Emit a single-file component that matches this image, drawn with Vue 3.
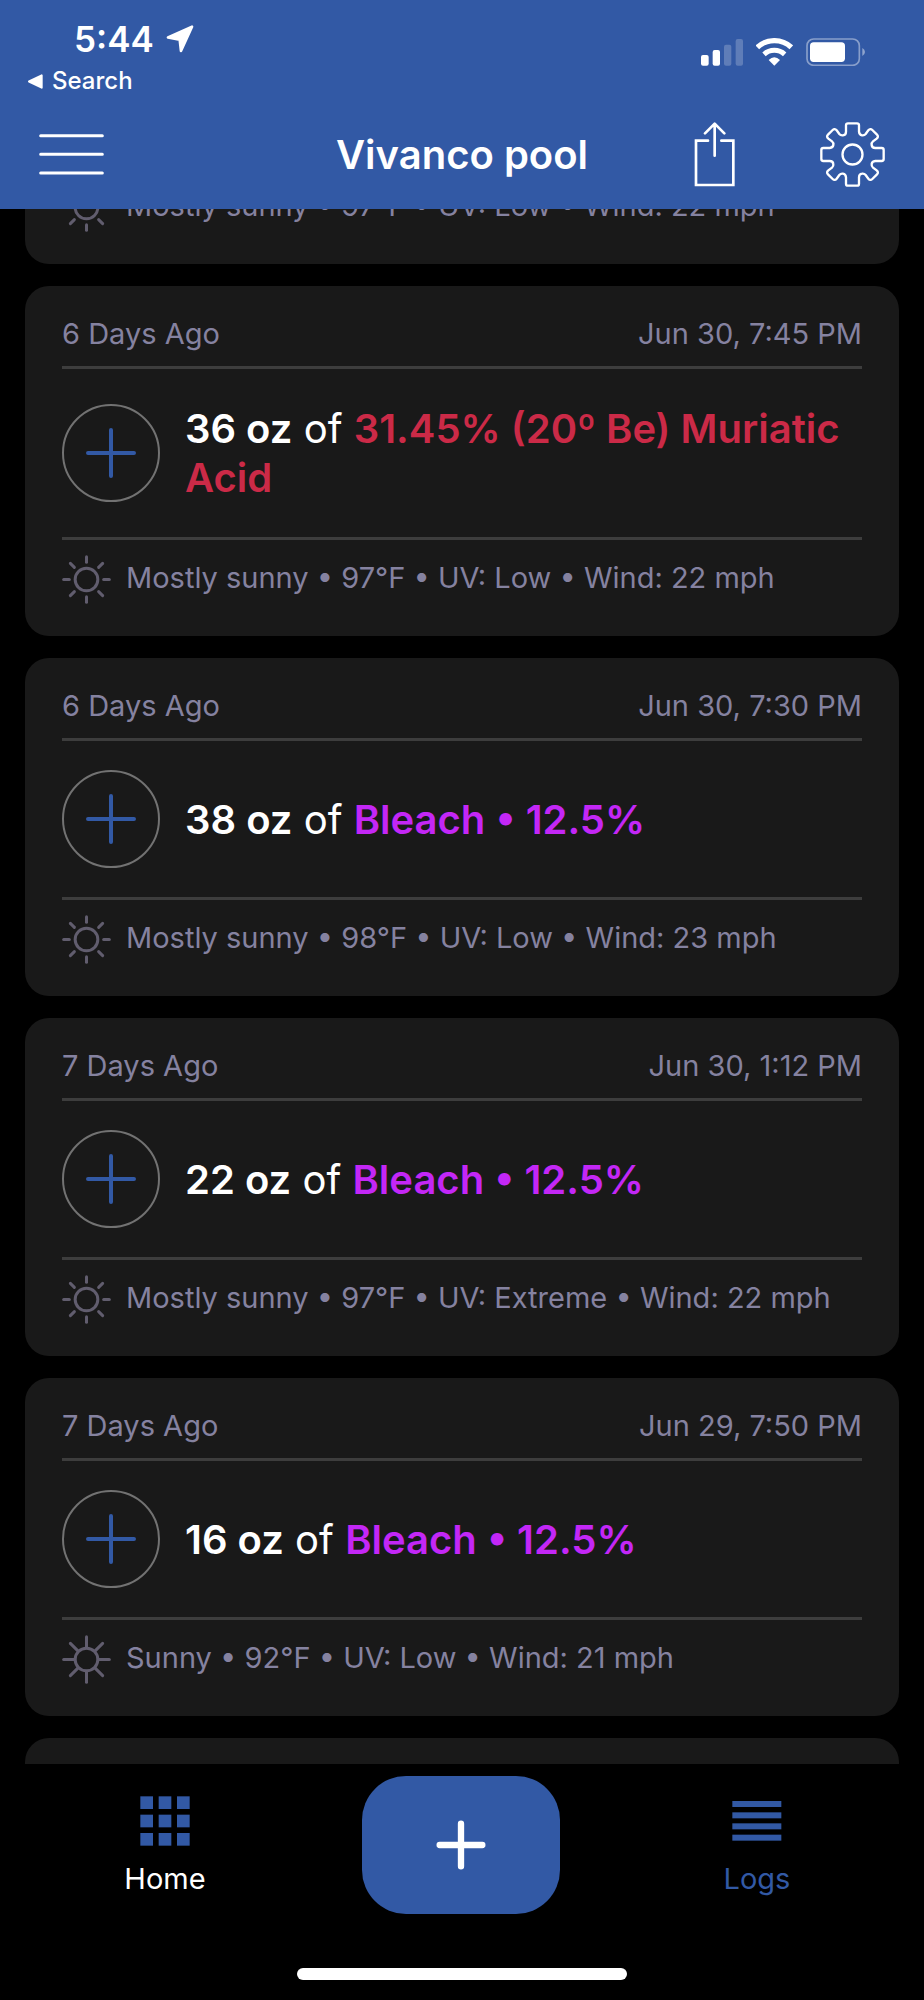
<script setup>
import { onMounted, ref } from 'vue'

const feed = ref(null)

const entries = [
  { id: 1, sky: 'partial', weather: 'Mostly sunny • 97°F • UV: Low • Wind: 22 mph' },
  {
    id: 2, age: '6 Days Ago', date: 'Jun 30, 7:45 PM', amount: '36 oz',
    product: '31.45% (20º Be) Muriatic Acid', kind: 'acid',
    sky: 'partial', weather: 'Mostly sunny • 97°F • UV: Low • Wind: 22 mph'
  },
  {
    id: 3, age: '6 Days Ago', date: 'Jun 30, 7:30 PM', amount: '38 oz',
    product: 'Bleach • 12.5%', kind: 'chlorine',
    sky: 'partial', weather: 'Mostly sunny • 98°F • UV: Low • Wind: 23 mph'
  },
  {
    id: 4, age: '7 Days Ago', date: 'Jun 30, 1:12 PM', amount: '22 oz',
    product: 'Bleach • 12.5%', kind: 'chlorine',
    sky: 'partial', weather: 'Mostly sunny • 97°F • UV: Extreme • Wind: 22 mph'
  },
  {
    id: 5, age: '7 Days Ago', date: 'Jun 29, 7:50 PM', amount: '16 oz',
    product: 'Bleach • 12.5%', kind: 'chlorine',
    sky: 'clear', weather: 'Sunny • 92°F • UV: Low • Wind: 21 mph'
  },
  { id: 6 }
]

const quarterTurns = [0, 90, 180, 270]
const eighthTurns = [0, 45, 90, 135, 180, 225, 270, 315]
const gridSteps = [0, 55, 110]
const lineSteps = [15, 49, 82, 116]

// The feed opens part-way down, below the weather row of a newer entry.
onMounted(() => {
  feed.value.scrollTop = 41
})
</script>

<template>
  <div class="app">
    <header class="header">
      <div class="status">
        <div class="status-left">
          <div class="time">
            <span>5:44</span>
            <svg class="location" viewBox="0 0 84 86" aria-hidden="true">
              <path d="M79 5 5 38 41 45 45 80Z" fill="#fff" stroke="#fff" stroke-width="8" stroke-linejoin="round" />
            </svg>
          </div>
          <a class="back" href="#search">
            <svg class="back-arrow" viewBox="0 0 46 46" aria-hidden="true">
              <path d="M3 23 42 4V42Z" fill="#fff" stroke="#fff" stroke-width="6" stroke-linejoin="round" />
            </svg>
            <span>Search</span>
          </a>
        </div>
        <div class="status-right">
          <svg class="signal" viewBox="0 0 126 84" aria-hidden="true">
            <g fill="#fff">
              <rect x="0" y="51" width="23" height="32" rx="6" />
              <rect x="35" y="36" width="22" height="47" rx="6" />
              <rect x="69" y="20" width="22" height="63" rx="6" opacity="0.22" />
              <rect x="104" y="3" width="22" height="80" rx="6" opacity="0.22" />
            </g>
          </svg>
          <svg class="wifi" viewBox="0 0 111 84" aria-hidden="true">
            <g fill="none" stroke="#fff">
              <path d="M4 28A75 75 0 0 1 106 28" stroke-width="16" />
              <path d="M24 49A46 46 0 0 1 86 49" stroke-width="15" />
            </g>
            <path d="M38 66Q55 50 72 66L55 83Z" fill="#fff" />
          </svg>
          <svg class="battery" viewBox="0 0 177 84" aria-hidden="true">
            <rect x="3" y="3" width="157" height="79" rx="20" fill="none" stroke="#fff" stroke-width="5" opacity="0.42" />
            <rect x="12" y="13" width="105" height="59" rx="11" fill="#fff" />
            <path d="M169 30Q177 35 177 42T169 54Z" fill="#fff" opacity="0.45" />
          </svg>
        </div>
      </div>

      <div class="nav">
        <button class="icon-button" type="button" aria-label="Menu">
          <svg class="nav-icon" viewBox="0 0 195 195" aria-hidden="true">
            <path d="M5 41H190M5 97H190M5 153H190" stroke="#fff" stroke-width="9" stroke-linecap="round" />
          </svg>
        </button>
        <h1 class="title">Vivanco pool</h1>
        <div class="nav-actions">
          <button class="icon-button" type="button" aria-label="Share">
            <svg class="share" viewBox="0 0 123 195" aria-hidden="true">
              <g fill="none" stroke="#fff" stroke-width="8" stroke-linecap="round">
                <path d="M42 56H6V189H118V56H82" />
                <path d="M62 101V6M33 34 62 5 91 34" stroke-linejoin="round" />
              </g>
            </svg>
          </button>
          <button class="icon-button" type="button" aria-label="Settings">
            <svg class="nav-icon" viewBox="0 0 195 195" aria-hidden="true">
              <g fill="none" stroke="#fff" stroke-width="7">
                <path
                  v-for="turn in quarterTurns"
                  :key="turn"
                  :transform="`rotate(${turn} 97.5 97.5)`"
                  d="M84 4H111Q117 4 117 10V29Q118 39 126 40Q133 41 137 36L145 25Q151 18 157 24L171 38Q177 44 170 50L159 58Q154 62 155 69Q156 78 166 78H185Q191 78 191 84"
                />
                <circle cx="97.5" cy="97.5" r="30" />
              </g>
            </svg>
          </button>
        </div>
      </div>
    </header>

    <main ref="feed" class="feed">
      <article v-for="entry in entries" :key="entry.id" class="card" :class="{ pending: !entry.weather }">
        <template v-if="entry.amount">
          <div class="card-head">
            <span>{{ entry.age }}</span>
            <time>{{ entry.date }}</time>
          </div>
          <div class="card-body">
            <svg class="dose-icon" viewBox="0 0 98 98" aria-hidden="true">
              <circle cx="49" cy="49" r="48" fill="none" stroke="#727272" stroke-width="2" />
              <path d="M26 49H72M49 26V72" stroke="#3259a5" stroke-width="4" stroke-linecap="round" />
            </svg>
            <p class="dose"><b>{{ entry.amount }}</b> of <b :class="entry.kind">{{ entry.product }}</b></p>
          </div>
        </template>
        <div v-if="entry.weather" class="card-foot">
          <svg class="sun" viewBox="0 0 147 147" aria-hidden="true">
            <g fill="none" stroke="#615d6e" stroke-width="9" stroke-linecap="round">
              <circle cx="73.5" cy="73.5" r="34" />
              <path
                v-for="turn in eighthTurns"
                :key="turn"
                :transform="`rotate(${turn} 73.5 73.5)`"
                :d="entry.sky === 'clear' ? 'M73.5 5V38' : 'M73.5 5V22'"
              />
            </g>
          </svg>
          <span class="weather">{{ entry.weather }}</span>
        </div>
      </article>
    </main>

    <footer class="footer">
      <nav class="tabs">
        <a class="tab" href="#home">
          <svg class="tab-icon" viewBox="0 0 150 150" aria-hidden="true">
            <template v-for="y in gridSteps" :key="y">
              <rect v-for="x in gridSteps" :key="x" :x="x + 1" :y="y + 1" width="38" height="38" fill="#3259a5" />
            </template>
          </svg>
          <span>Home</span>
        </a>
        <button class="add" type="button" aria-label="Add log">
          <svg class="tab-icon" viewBox="0 0 150 150" aria-hidden="true">
            <path d="M11 75H139M75 11V139" stroke="#fff" stroke-width="19" stroke-linecap="round" />
          </svg>
        </button>
        <a class="tab active" href="#logs" aria-current="page">
          <svg class="tab-icon" viewBox="0 0 150 150" aria-hidden="true">
            <rect v-for="y in lineSteps" :key="y" x="1" :y="y" width="147" height="18" fill="#3259a5" />
          </svg>
          <span>Logs</span>
        </a>
      </nav>
      <div class="home-indicator"></div>
    </footer>
  </div>
</template>

<style>
body {
  background: #000;
}
</style>

<style scoped>
.app {
  display: flex;
  flex-direction: column;
  height: 100vh;
  background: #000;
  color: #fff;
  font-family: Inter, "Liberation Sans", sans-serif;
}

.header {
  flex: none;
  background: #3259a5;
}

.status {
  display: flex;
  justify-content: space-between;
  height: 100px;
  box-sizing: border-box;
  padding: 21px 59px 0 28px;
}

.status-left {
  display: flex;
  flex-direction: column;
  gap: 8px;
}

.time {
  display: flex;
  align-items: center;
  gap: 12px;
  padding-left: 46px;
  font-size: 35px;
  font-weight: 600;
  line-height: 36px;
}

.location {
  width: 28px;
  height: 28px;
}

.back {
  display: flex;
  align-items: center;
  gap: 9px;
  color: #fff;
  font-size: 24px;
  font-weight: 500;
  line-height: 32px;
  text-decoration: none;
}

.back-arrow {
  width: 15px;
  height: 15px;
}

.status-right {
  display: flex;
  gap: 13px;
  padding-top: 17px;
}

.signal {
  width: 42px;
  height: 28px;
}

.wifi {
  width: 37px;
  height: 28px;
}

.battery {
  width: 59px;
  height: 28px;
}

.nav {
  display: grid;
  grid-template-columns: 1fr auto 1fr;
  align-items: center;
  height: 109px;
  padding: 0 39px;
}

.icon-button {
  display: block;
  justify-self: start;
  padding: 0;
  border: 0;
  background: none;
}

.icon-button svg {
  display: block;
}

.nav-icon {
  width: 65px;
  height: 65px;
}

.share {
  width: 41px;
  height: 65px;
}

.title {
  margin: 0;
  font-size: 40px;
  font-weight: 600;
  line-height: 48px;
}

.nav-actions {
  display: flex;
  justify-self: end;
  gap: 85px;
}

.feed {
  display: flex;
  flex: 1;
  flex-direction: column;
  gap: 22px;
  min-height: 0;
  padding: 0 25px;
  overflow-y: auto;
  scrollbar-width: none;
}

.card {
  flex: none;
  padding: 0 37px;
  border-radius: 24px;
  background: #191919;
}

.pending {
  height: 338px;
}

.card-head {
  display: flex;
  justify-content: space-between;
  height: 80px;
  box-sizing: border-box;
  padding-top: 30px;
  color: #8582a0;
  font-size: 29px;
  line-height: 36px;
}

.card-body {
  display: flex;
  align-items: center;
  gap: 25px;
  min-height: 156px;
  border-top: 3px solid #3d3d3d;
  border-bottom: 3px solid #3d3d3d;
}

.dose-icon {
  flex: none;
  width: 98px;
  height: 98px;
}

.dose {
  margin: 0;
  padding: 35px 0;
  font-size: 40px;
  line-height: 49px;
}

.dose b {
  font-weight: 600;
}

.dose .acid {
  color: #cb2a47;
}

.dose .chlorine {
  color: #c327f6;
}

.card-foot {
  display: flex;
  gap: 15px;
  height: 96px;
  box-sizing: border-box;
  padding-top: 15px;
}

.sun {
  flex: none;
  width: 49px;
  height: 49px;
}

.weather {
  padding-top: 5px;
  color: #8582a0;
  font-size: 29px;
  line-height: 36px;
}

.footer {
  display: flex;
  flex: none;
  flex-direction: column;
  align-items: center;
  justify-content: space-between;
  height: 236px;
  box-sizing: border-box;
  padding-bottom: 20px;
}

.tabs {
  display: grid;
  grid-template-columns: repeat(3, 1fr);
  justify-items: center;
  align-self: stretch;
  padding: 12px 19px 0 17px;
}

.tab {
  display: flex;
  flex-direction: column;
  align-items: center;
  gap: 15px;
  padding-top: 20px;
  color: #fff;
  font-size: 29px;
  line-height: 36px;
  text-decoration: none;
}

.active {
  color: #3259a5;
}

.tab-icon {
  display: block;
  width: 50px;
  height: 50px;
}

.add {
  display: flex;
  align-items: center;
  justify-content: center;
  width: 198px;
  height: 138px;
  padding: 0;
  border: 0;
  border-radius: 44px;
  background: #3259a5;
}

.home-indicator {
  width: 330px;
  height: 12px;
  border-radius: 6px;
  background: #fff;
}
</style>
